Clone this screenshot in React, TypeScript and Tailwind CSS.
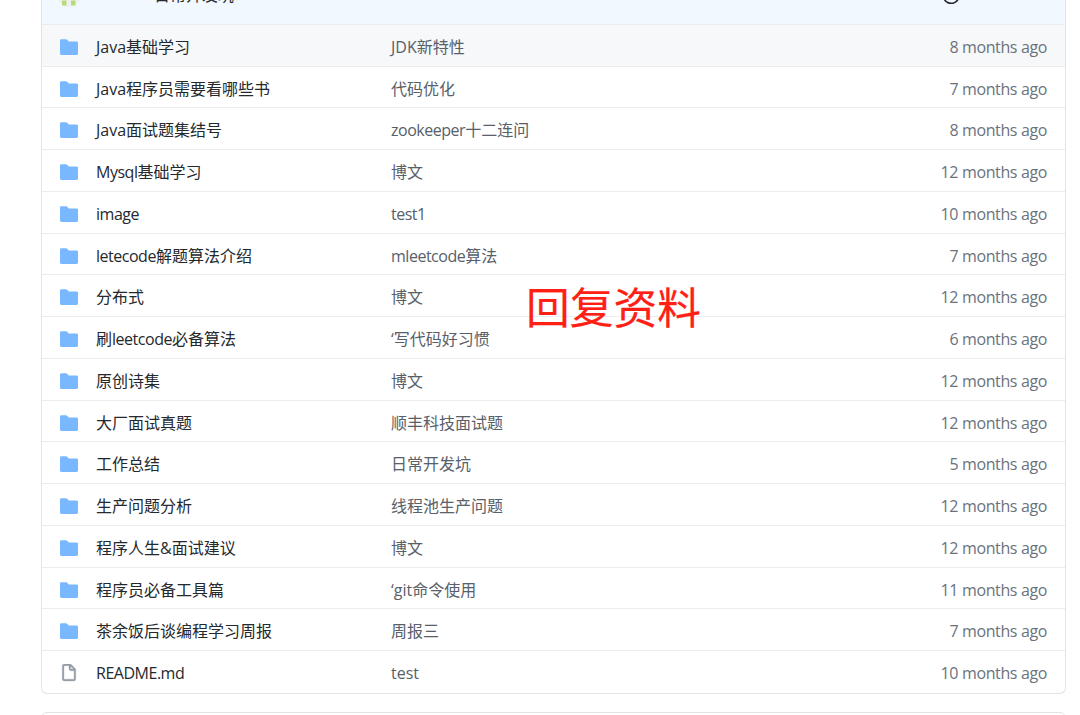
interface Entry {
  name: string;
  message: string;
  age: string;
  file?: boolean;
}

const entries: Entry[] = [
  { name: 'Java基础学习', message: 'JDK新特性', age: '8 months ago' },
  { name: 'Java程序员需要看哪些书', message: '代码优化', age: '7 months ago' },
  { name: 'Java面试题集结号', message: 'zookeeper十二连问', age: '8 months ago' },
  { name: 'Mysql基础学习', message: '博文', age: '12 months ago' },
  { name: 'image', message: 'test1', age: '10 months ago' },
  { name: 'letecode解题算法介绍', message: 'mleetcode算法', age: '7 months ago' },
  { name: '分布式', message: '博文', age: '12 months ago' },
  { name: '刷leetcode必备算法', message: '‘写代码好习惯', age: '6 months ago' },
  { name: '原创诗集', message: '博文', age: '12 months ago' },
  { name: '大厂面试真题', message: '顺丰科技面试题', age: '12 months ago' },
  { name: '工作总结', message: '日常开发坑', age: '5 months ago' },
  { name: '生产问题分析', message: '线程池生产问题', age: '12 months ago' },
  { name: '程序人生&面试建议', message: '博文', age: '12 months ago' },
  { name: '程序员必备工具篇', message: '‘git命令使用', age: '11 months ago' },
  { name: '茶余饭后谈编程学习周报', message: '周报三', age: '7 months ago' },
  { name: 'README.md', message: 'test', age: '10 months ago', file: true },
];

function FolderIcon() {
  return (
    <svg className="h-[18px] w-[18px] fill-[#79b8ff]" viewBox="0 0 16 16">
      <path d="M1.25 1A1.25 1.25 0 000 2.25v11.5C0 14.44.56 15 1.25 15h13.5c.69 0 1.25-.56 1.25-1.25v-9.5C16 3.56 15.44 3 14.75 3h-7a.25.25 0 01-.2-.1l-.9-1.2c-.33-.44-.85-.7-1.4-.7h-4z" />
    </svg>
  );
}

function FileIcon() {
  return (
    <svg className="h-[18px] w-[18px] fill-[#959da5] stroke-[#959da5] stroke-[0.3]" viewBox="0 0 16 16">
      <path
        fillRule="evenodd"
        d="M3.75 1.5a.25.25 0 00-.25.25v11.5c0 .138.112.25.25.25h8.5a.25.25 0 00.25-.25V6H9.75A1.75 1.75 0 018 4.25V1.5H3.75zm5.75.56v2.19c0 .138.112.25.25.25h2.19L9.5 2.06zM2 1.75C2 .784 2.784 0 3.75 0h5.086c.464 0 .909.184 1.237.513l3.414 3.414c.329.328.513.773.513 1.237v8.086A1.75 1.75 0 0112.25 15h-8.5A1.75 1.75 0 012 13.25V1.75z"
      />
    </svg>
  );
}

function Avatar() {
  return (
    <svg className="h-6 w-6" viewBox="0 0 24 24">
      <circle cx="12" cy="12" r="12" fill="#f0f0f0" />
      <path d="M9.5 4h5v5h-5zM5 9h4.5v5H5zM14 9h4.5v5H14zM5 17.5h4.5v5H5zM14 17.5h4.5v5H14z" fill="#b5db7c" />
    </svg>
  );
}

function HistoryIcon() {
  return (
    <svg className="h-[18px] w-[18px] fill-none stroke-[#24292e] stroke-[1.5]" viewBox="0 0 16 16">
      <path d="M1.6 6.3A6.9 6.9 0 111.3 9.5M1 2v4h4M8 4.5V8l2.5 1.5" />
    </svg>
  );
}

// Longer latin words are set a little tighter than the CJK text around them
function MixedText({ text }: { text: string }) {
  return (
    <>
      {text.split(/([A-Za-z0-9.]{5,})/).map((part, i) =>
        i % 2 === 1 ? (
          <span key={i} className="tracking-[-0.48px]">
            {part}
          </span>
        ) : (
          part
        )
      )}
    </>
  );
}

export default function App() {
  return (
    <div className="relative h-[715px] overflow-hidden bg-white pl-[41px] pr-[14px] font-['Open_Sans','Noto_Sans_CJK_SC',sans-serif] text-[16px]">
      <div className="flex h-[694px] flex-col rounded-b-md border-x border-b border-[#e1e4e8]">
        {/* Latest commit */}
        <div className="-mx-px -mt-[34px] flex h-[57.75px] shrink-0 items-center border-x border-[#d3e6fc] bg-[#f1f8ff] pl-[15px] text-[#24292e]">
          <Avatar />
          <div className="ml-[73px] flex-1 pt-px">日常开发坑</div>
          <div className="mr-[105px]">
            <HistoryIcon />
          </div>
        </div>

        {/* Files */}
        {entries.map((entry, i) => (
          <div
            key={entry.name}
            className={`flex h-[41.75px] shrink-0 items-center border-t border-[#eaecef] px-[18px] pt-[3.4px] ${
              i === 0 ? 'bg-[#f6f8fa]' : ''
            }`}
          >
            <div className="flex w-[36px]">{entry.file ? <FileIcon /> : <FolderIcon />}</div>
            <div className="w-[295px] text-[#24292e]">
              <MixedText text={entry.name} />
            </div>
            <div className="flex-1 text-[#586069]">
              <MixedText text={entry.message} />
            </div>
            <div className="tracking-[-0.37px] text-[#6a737d]">{entry.age}</div>
          </div>
        ))}
      </div>
      <div className="mt-[18px] h-[20px] rounded-t-md border border-[#e1e4e8]" />
      <div className="absolute left-[526px] top-[275px] whitespace-nowrap text-[43.75px] text-[#ff2015] [-webkit-text-stroke:0.2px_#ff2015]">
        回复资料
      </div>
    </div>
  );
}
